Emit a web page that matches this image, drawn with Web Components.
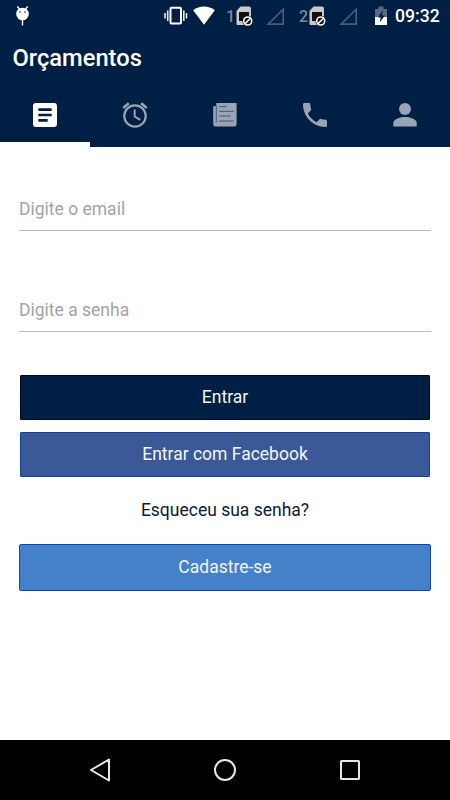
<!DOCTYPE html>
<html lang="pt-BR">
<head>
<meta charset="utf-8">
<title>Orçamentos</title>
<style>
  html, body {
    margin: 0;
    height: 100%;
    overflow: hidden;
    background: #fff;
    font-family: Roboto, "Liberation Sans", sans-serif;
  }
</style>
</head>
<body>
<login-screen></login-screen>

<template id="status-bar">
  <style>
    :host {
      display: flex;
      align-items: center;
      height: 32px;
      background: #001f44;
      color: #fff;
    }
    svg { display: block; flex: none; }
    .bug { margin-left: 15px; margin-right: auto; }
    .vibrate { margin-right: 5px; }
    .wifi { margin-right: 11px; }
    .sim { display: flex; flex: none; align-items: center; width: 59px; margin-right: 14px; }
    .sim.second { margin-right: 16px; }
    .sim span { width: 10px; font-size: 16px; font-weight: 500; line-height: 32px; color: #7b899d; padding-top: 2px; }
    .sim .signal { margin-left: auto; }
    .clock { width: 44px; margin: 0 11px 0 6px; font-size: 17.6px; font-weight: 500; line-height: 32px; white-space: nowrap; }
  </style>
  <svg class="bug" width="15" height="32" viewBox="0 0 15 32">
    <path d="M2.3 6.5 4.5 9M12.7 6.5 10.5 9M7.5 20v5.5" stroke="#fff" stroke-width="1.4" fill="none"/>
    <circle cx="7.5" cy="14" r="6.3" fill="#fff"/>
    <circle cx="5" cy="12" r=".8" fill="#001f44"/><circle cx="10" cy="12" r=".8" fill="#001f44"/>
  </svg>
  <svg class="vibrate" width="24" height="32" viewBox="0 0 24 32">
    <rect x="6.5" y="7.8" width="10.5" height="15.6" rx="1" stroke="#fff" stroke-width="2" fill="none"/>
    <path d="M3.7 10.5v10.5M19.8 10.5v10.5M1 13v5.5M22.5 13v5.5" stroke="#e5e9ee" stroke-width="1.6"/>
  </svg>
  <svg class="wifi" width="22" height="32" viewBox="0 0 22 32">
    <path d="M11 24.8.2 10.2C6.5 5.2 15.5 5.2 21.8 10.2z" fill="#fff"/>
  </svg>
  <div class="sim"><span>1</span></div>
  <div class="sim second"><span>2</span></div>
  <svg width="15" height="32" viewBox="0 0 15 32">
    <path d="M1 9h3.5V6.5h5V9H13v8H1z" fill="#566a84"/>
    <path d="M1 17h12v8H1z" fill="#fff"/>
    <path d="M8.7 10 4 17.500h2.700L5.800 22.500l5-7H8z" fill="#001f44"/>
  </svg>
  <span class="clock">09:32</span>
</template>

<template id="sim-icons">
  <svg width="18" height="32" viewBox="0 0 18 32">
    <path d="M4.500 6.500H13q2 0 2 2V25H1.500q-1 0-1-1V11z" fill="#c9cacc"/>
    <path d="M3 12h10v9H3z" fill="#111"/>
    <circle cx="11.700" cy="21" r="5.400" fill="#111"/>
    <circle cx="11.700" cy="21" r="4" fill="none" stroke="#fff" stroke-width="1.600"/>
    <path d="m9 23.700 5.400-5.400" stroke="#fff" stroke-width="1.600"/>
  </svg>
  <svg class="signal" width="19" height="32" viewBox="0 0 19 32">
    <path d="M17.200 9.200v15H2.200z" fill="none" stroke="#495b76" stroke-width="1.700"/>
  </svg>
</template>

<template id="app-tab">
  <style>
    :host {
      display: flex;
      flex: 1;
      box-sizing: border-box;
      height: 60px;
      align-items: center;
      justify-content: center;
      border-bottom: 5px solid transparent;
      color: #99a5b4;
    }
    :host([active]) { color: #fff; border-bottom-color: #fff; }
  </style>
  <slot></slot>
</template>

<template id="app-header">
  <style>
    :host { display: block; height: 115px; background: #001f44; color: #fff; }
    h1 { margin: 0; padding: 0 12.500px; height: 55px; font-size: 23.700px; font-weight: 500; line-height: 52px; }
    nav { display: flex; }
    svg { display: block; }
  </style>
  <h1><slot></slot></h1>
  <nav>
    <app-tab active>
      <svg width="32" height="32" viewBox="0 0 24 24" fill="currentColor"><path d="M19 3H5c-1.100 0-2 .9-2 2v14c0 1.100.9 2 2 2h14c1.100 0 2-.9 2-2V5c0-1.100-.9-2-2-2zm-5 14H7v-2h7v2zm3-4H7v-2h10v2zm0-4H7V7h10v2z"/></svg>
    </app-tab>
    <app-tab>
      <svg width="32" height="32" viewBox="0 0 32 32" fill="none" stroke="currentColor">
        <circle cx="16" cy="17" r="10.700" stroke-width="2.200"/>
        <path d="M15.700 10.500v7l5.500 3.400" stroke-width="1.900"/>
        <path d="M4.200 9 9.800 4.300M22.200 4.300 27.800 9" stroke-width="2.600"/>
      </svg>
    </app-tab>
    <app-tab>
      <svg width="32" height="32" viewBox="0 0 32 32">
        <path d="M7.300 7H5.500q-1.300 0-1.300 1.300v17q0 2.200 2.200 2.200h19q2.200 0 2.200-2.200V4H7.300z" fill="currentColor"/>
        <path d="M7.300 7v16.500M10.200 7.600h7.500M10.200 12.300h14.500M10.200 17h11.500M10.200 22h14.500" stroke="#435873" stroke-width="1" fill="none"/>
      </svg>
    </app-tab>
    <app-tab>
      <svg width="32" height="32" viewBox="0 0 24 24" fill="currentColor"><path d="M6.620 10.790c1.440 2.830 3.760 5.140 6.590 6.590l2.200-2.200c.27-.27.67-.36 1.020-.24 1.120.37 2.330.57 3.570.57.550 0 1 .45 1 1V20c0 .55-.45 1-1 1-9.390 0-17-7.610-17-17 0-.55.450-1 1-1h3.500c.550 0 1 .45 1 1 0 1.250.2 2.450.570 3.570.110.350.030.740-.250 1.020l-2.200 2.200z"/></svg>
    </app-tab>
    <app-tab>
      <svg width="32" height="32" viewBox="0 0 32 32" fill="currentColor"><circle cx="16" cy="10" r="6"/><path d="M4.300 27.500V24c0-4.200 7.400-6 11.700-6s11.700 1.800 11.700 6v3.500z"/></svg>
    </app-tab>
  </nav>
</template>

<template id="text-field">
  <style>
    :host {
      display: block;
      box-sizing: border-box;
      height: 45px;
      border-bottom: 1px solid #bcbcbc;
      color: #a3a3a3;
      font-size: 17.500px;
      line-height: 47px;
      white-space: nowrap;
    }
  </style>
  <slot></slot>
</template>

<template id="action-button">
  <style>
    :host { display: block; }
    button {
      display: block;
      box-sizing: border-box;
      width: 100%;
      height: 45px;
      padding: 0;
      border: 1px solid #000817;
      border-radius: 1px;
      background: #001f44;
      color: #f4f6f9;
      font: 400 17.500px/41px Roboto, "Liberation Sans", sans-serif;
    }
    :host([kind="facebook"]) button { background: #3b5998; border-color: #164391; }
    :host([kind="signup"]) button { height: 47px; background: #4581ca; border-color: #0d4aa8; border-radius: 2px; line-height: 43px; }
    :host([kind="link"]) button { background: none; border: 0; color: #0d1b36; height: 24px; line-height: 24px; }
  </style>
  <button><slot></slot></button>
</template>

<template id="nav-bar">
  <style>
    :host {
      display: flex;
      align-items: center;
      justify-content: space-between;
      box-sizing: border-box;
      height: 60px;
      padding: 0 84px;
      background: #000;
    }
    svg { display: block; fill: none; stroke: #e8e8e8; stroke-width: 2; }
  </style>
  <svg width="32" height="32" viewBox="0 0 32 32"><path d="M25 5.500v21L7 16z" stroke-linejoin="round"/></svg>
  <svg width="32" height="32" viewBox="0 0 32 32"><circle cx="16" cy="16" r="10"/></svg>
  <svg width="32" height="32" viewBox="0 0 32 32"><rect x="7" y="7" width="18" height="18" rx=".5"/></svg>
</template>

<template id="login-screen">
  <style>
    :host { display: flex; flex-direction: column; width: 450px; height: 800px; background: #fff; }
    main { flex: 1; padding: 39px 19px 0; }
    text-field + text-field { margin-top: 56px; }
    .actions { padding: 0 1px; margin-top: 43px; display: grid; gap: 12px; }
    .forgot { margin-top: 21px; }
    .signup { margin-top: 22px; }
  </style>
  <status-bar></status-bar>
  <app-header>Orçamentos</app-header>
  <main>
    <text-field>Digite o email</text-field>
    <text-field>Digite a senha</text-field>
    <div class="actions">
      <action-button>Entrar</action-button>
      <action-button kind="facebook">Entrar com Facebook</action-button>
    </div>
    <action-button class="forgot" kind="link">Esqueceu sua senha?</action-button>
    <action-button class="signup" kind="signup">Cadastre-se</action-button>
  </main>
  <nav-bar></nav-bar>
</template>

<script>
  function cloneTemplate(id) {
    return document.getElementById(id).content.cloneNode(true)
  }

  class BaseElement extends HTMLElement {
    constructor() {
      super()
      this.attachShadow({ mode: 'open' })
      this.shadowRoot.appendChild(cloneTemplate(this.localName))
    }
  }

  class StatusBar extends BaseElement {
    constructor() {
      super()
      // both SIM slots share the same icons
      this.shadowRoot.querySelectorAll('.sim').forEach(sim => {
        sim.appendChild(cloneTemplate('sim-icons'))
      })
    }
  }

  class AppTab extends BaseElement {}
  class AppHeader extends BaseElement {}
  class TextField extends BaseElement {}
  class ActionButton extends BaseElement {}
  class NavBar extends BaseElement {}
  class LoginScreen extends BaseElement {}

  customElements.define('status-bar', StatusBar)
  customElements.define('app-tab', AppTab)
  customElements.define('app-header', AppHeader)
  customElements.define('text-field', TextField)
  customElements.define('action-button', ActionButton)
  customElements.define('nav-bar', NavBar)
  customElements.define('login-screen', LoginScreen)
</script>
</body>
</html>
